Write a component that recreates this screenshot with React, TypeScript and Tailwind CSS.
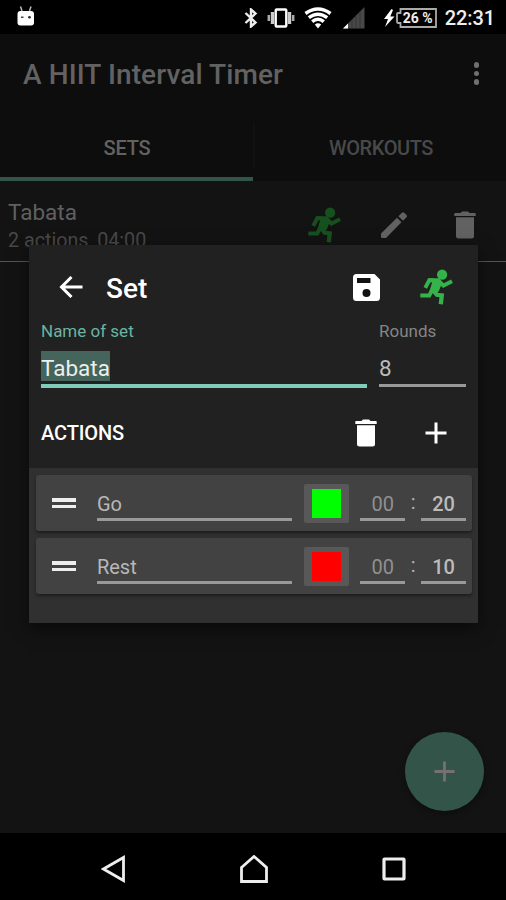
import { useState } from "react";
import type { ReactNode } from "react";

type IconProps = {
  className?: string;
};

type ActionType = {
  id: number;
  name: string;
  color: string;
  minutes: string;
  seconds: string;
};

const actions: ActionType[] = [
  { id: 1, name: "Go", color: "#00ff00", minutes: "00", seconds: "20" },
  { id: 2, name: "Rest", color: "#ff0000", minutes: "00", seconds: "10" },
];

function RunIcon({ className }: IconProps) {
  return (
    <svg viewBox="0 0 100 107" className={className} fill="none" stroke="currentColor">
      <circle cx="67" cy="16" r="15.5" fill="currentColor" stroke="none" />
      <path d="M26 27 L58 27 L68 38 L58 64 L50 76 L28 68 L37 39 L26 39 Z" fill="currentColor" stroke="none" />
      <path d="M40 33 H28 L16 56" strokeWidth="12" />
      <path d="M56 35 L71 49 L97 36" strokeWidth="12" />
      <path d="M37 62 L28 79.5 H1" strokeWidth="12" />
      <path d="M42 66 L51 77 L66 79 L63 106" strokeWidth="13" />
    </svg>
  );
}

function TrashIcon({ className }: IconProps) {
  return (
    <svg viewBox="0 0 22 28" className={className} fill="currentColor">
      <path d="M1 2h5.500L8 0.500h6L15.500 2H21a.7.7 0 0 1 .7.7V5H.3V2.700A.7.7 0 0 1 1 2z" />
      <path d="M2 6.300h18V25a2.500 2.500 0 0 1-2.500 2.500h-13A2.500 2.500 0 0 1 2 25z" />
    </svg>
  );
}

function PencilIcon({ className }: IconProps) {
  return (
    <svg viewBox="0 0 26 26" className={className} fill="currentColor">
      <path d="M0 21.500 16 5.700l4.500 4.500L5 26H1.200A1.200 1.200 0 0 1 0 24.800z" />
      <path d="m17.400 4.300 3.300-3.400a1.900 1.900 0 0 1 2.700 0l1.900 1.900a1.900 1.900 0 0 1 0 2.700L22 8.800z" />
    </svg>
  );
}

function SaveIcon({ className }: IconProps) {
  return (
    <svg viewBox="0 0 27 27" className={className}>
      <path
        d="M3.500 0H21.500L27 5.500v18a3.500 3.500 0 0 1-3.500 3.500h-20A3.500 3.500 0 0 1 0 23.500v-20A3.500 3.500 0 0 1 3.500 0z"
        fill="#fff"
      />
      <path d="M4 4h13.500v5H4z" fill="#111" />
      <circle cx="13.500" cy="19" r="4" fill="#111" />
    </svg>
  );
}

function PlusIcon({ className }: IconProps) {
  return (
    <svg viewBox="0 0 22 22" className={className} stroke="currentColor" strokeWidth="3">
      <path d="M11 .5v21M.5 11h21" />
    </svg>
  );
}

function StatusBar() {
  return (
    <div className="flex h-[34px] shrink-0 items-center justify-between bg-black pr-[11px] pl-[17px] text-[#eee]">
      <svg viewBox="0 0 18 20" className="h-5 w-[18px] -translate-y-px">
        <path d="M3.500 0.500 5 5M14 0.500 12.500 5" stroke="#bbb" strokeWidth="1.500" />
        <rect x=".5" y="5" width="16.500" height="14.500" rx="3" fill="#fff" />
        <rect x="4" y="10.500" width="2.500" height="1.500" fill="#444" />
        <circle cx="12.500" cy="11.300" r="1.300" fill="#222" />
      </svg>
      <div className="flex items-center pt-px">
        <svg viewBox="0 0 14 20" className="h-5 w-3.5" fill="none" stroke="#eee" strokeWidth="2.4">
          <path d="m1.500 5 10 9.500L7 18.500v-17L11.500 5.500 1.500 15" />
        </svg>
        <svg viewBox="0 0 28 20" className="ml-[9px] h-5 w-7">
          <rect x="8.700" y="1.500" width="10.600" height="17" rx="1" fill="none" stroke="#fff" strokeWidth="2.4" />
          <path d="M5.500 4v12M22.500 4v12" stroke="#ccc" strokeWidth="3.4" />
          <path d="M1.800 7v6M26.200 7v6" stroke="#aaa" strokeWidth="2.500" />
        </svg>
        <svg viewBox="0 0 28 22" className="ml-[9px] h-[22px] w-7" fill="none" stroke="#fff" strokeWidth="3.500">
          <path d="M1.500 6.500q12.500-9 25 0" />
          <path d="M4.800 10.700q9.200-7 18.400 0" />
          <path d="M8.200 14.600q5.800-4.800 11.600 0" />
          <path d="m10.800 17.500 3.200 4 3.200-4q-3.200-2.400-6.400 0z" fill="#fff" stroke="none" />
        </svg>
        <svg viewBox="0 0 22 22" className="ml-[11px] h-[22px] w-[22px]">
          <path d="M0 21.500 21.500 0v21.500z" fill="#484848" />
          <path d="M9 12.500v9M13 8.500v13M17 4.500v17" stroke="#333" />
          <path d="m0 21.500 5-5v5z" fill="#fff" />
        </svg>
        <svg viewBox="0 0 12 18" className="ml-[18px] h-[18px] w-3" fill="#fff">
          <path d="M8.500 0 1 10h4L2 18l9.500-10.500H7.300L10 1z" />
        </svg>
        <div className="relative ml-px flex h-5 w-[41px] items-center justify-center">
          <svg viewBox="0 0 41 20" className="absolute inset-0" fill="none" stroke="#aaa" strokeWidth="1.800">
            <path d="M4.500 1H40v18H4.500v-4H2Q1 15 1 13V7q0-2 1-2h2.500z" />
          </svg>
          <span className="relative ml-[3px] text-[14px] leading-none font-bold whitespace-nowrap">26 %</span>
        </div>
        <span className="ml-[8px] text-[20px] leading-none font-medium tracking-[-0.1px]">22:31</span>
      </div>
    </div>
  );
}

function Underlined({ className, children }: { className: string; children: ReactNode }) {
  return (
    <div className={`h-[37px] border-b-[3px] border-[#999] text-[20px] leading-[29px] ${className}`}>
      {children}
    </div>
  );
}

function ActionRow({ action }: { action: ActionType }) {
  return (
    <li className="flex h-14 rounded-[3px] bg-[#424242] pr-[6px] pl-4 shadow-[0_2px_3px_rgba(0,0,0,0.4)]">
      <div className="mt-[23px] flex w-6 flex-col gap-[3px]">
        <span className="h-[3.500px] bg-[#eee]" />
        <span className="h-[3.500px] bg-[#eee]" />
      </div>
      <Underlined className="mt-[9px] ml-[21px] w-[196px] pt-[6px] text-[#b8b8b8]">{action.name}</Underlined>
      <button className="mt-[9px] ml-[11.500px] flex h-[39px] w-[45px] justify-center rounded-[2px] bg-[#585858] pt-[5px]">
        <span className="h-[29px] w-[29px]" style={{ backgroundColor: action.color }} />
      </button>
      <Underlined className="mt-[9px] ml-[11.500px] w-[45px] pt-[6px] text-center text-[#909090]">
        {action.minutes}
      </Underlined>
      <span className="mt-[14px] w-4 text-center text-[20px] leading-[26px] text-[#b0b0b0]">:</span>
      <Underlined className="mt-[9px] w-[45px] pt-[6px] text-center font-medium text-[#bbb]">
        {action.seconds}
      </Underlined>
    </li>
  );
}

function SetDialog() {
  return (
    <section className="absolute top-[245px] left-[29px] h-[378px] w-[449px] bg-[#303030] shadow-[0_6px_16px_rgba(0,0,0,0.5)]">
      <div className="h-[223px] bg-[#212121] px-3">
        {/* Title */}
        <div className="flex h-[84px] items-center pr-[13px] pl-[18px] text-white">
          <svg viewBox="0 0 24 22" className="h-[22px] w-6" fill="none" stroke="currentColor" strokeWidth="3">
            <path d="M23.500 11H2.500M12.500 1l-10 10 10 10" />
          </svg>
          <h2 className="mt-[3px] ml-[23px] text-[28px] leading-none font-medium">Set</h2>
          <SaveIcon className="ml-auto h-[27px] w-[27px]" />
          <RunIcon className="ml-[40px] h-[36px] w-[33px] text-[#35b34a]" />
        </div>

        {/* Fields */}
        <div className="-mt-[9px] flex gap-[11px]">
          <label className="w-[327px] text-[17px] leading-[22px] text-[#69b5a1]">
            Name of set
            <div className="mt-[9px] h-[37px] border-b-4 border-[#80cbba]">
              <span className="inline-block h-[30px] bg-[#44645c] text-[22.500px] leading-[34px] text-[#eee]">
                Tabata
              </span>
            </div>
          </label>
          <label className="w-[88px] shrink-0 pl-px text-[17px] leading-[22px] text-[#858585]">
            Rounds
            <div className="mt-[9px] h-[36px] border-b-[3px] border-[#999] text-[22.500px] leading-[34px] text-[#bbb]">
              8
            </div>
          </label>
        </div>

        {/* Actions toolbar */}
        <div className="mt-[10px] flex h-[70px] items-center pr-[19px] text-white">
          <h3 className="text-[20px] font-medium tracking-[-0.1px]">ACTIONS</h3>
          <TrashIcon className="ml-auto h-7 w-[22px]" />
          <PlusIcon className="ml-[48px] h-[22px] w-[22px]" />
        </div>
      </div>
      <ul className="flex flex-col gap-[7px] pt-[7px] pr-[6px] pl-[7px]">
        {actions.map((action) => (
          <ActionRow key={action.id} action={action} />
        ))}
      </ul>
    </section>
  );
}

export default function App() {
  const [tab, setTab] = useState("SETS");

  return (
    <main className="relative flex h-[900px] w-[506px] flex-col overflow-hidden bg-[#131313] font-[Roboto,sans-serif]">
      <StatusBar />
      <header className="h-[147px] shrink-0 bg-[#0d0d0d]">
        <div className="flex h-[81px] items-center justify-between pr-[27px] pl-[23px]">
          <h1 className="text-[28px] font-medium tracking-[0.1px] text-[#626262]">A HIIT Interval Timer</h1>
          <div className="-mt-0.5 flex flex-col gap-[3px]">
            <span className="h-[5.500px] w-[5.500px] rounded-full bg-[#707070]" />
            <span className="h-[5.500px] w-[5.500px] rounded-full bg-[#707070]" />
            <span className="h-[5.500px] w-[5.500px] rounded-full bg-[#707070]" />
          </div>
        </div>
        <nav className="flex h-[66px]">
          {["SETS", "WORKOUTS"].map((name) => (
            <button
              key={name}
              onClick={() => setTab(name)}
              className={
                tab === name
                  ? "w-[253px] border-b-4 border-[#335549] pt-[3px] pl-px text-[20px] font-medium tracking-[-0.2px] text-[#626262]"
                  : "w-[253px] border-b-4 border-transparent pt-[3px] pl-[3px] text-[20px] font-medium tracking-[-0.4px] text-[#494949]"
              }
            >
              {name}
            </button>
          )).flatMap((button, i) =>
            i === 0 ? [button] : [<span key="divider" className="mt-2 -mr-0.5 h-11 w-0.5 bg-[#111]" />, button]
          )}
        </nav>
      </header>

      <div className="flex h-[81px] shrink-0 border-b border-[#555] pt-[17px] pl-2">
        <div className="w-[300px]">
          <p className="text-[22.500px] leading-[28px] text-[#606060]">Tabata</p>
          <p className="text-[19.700px] leading-[29px] text-[#484848]">2 actions, 04:00</p>
        </div>
        <RunIcon className="mt-[9px] h-[36px] w-[33px] text-[#17501f]" />
        <PencilIcon className="mt-[14px] ml-[40px] h-[26px] w-[26px] text-[#626262]" />
        <TrashIcon className="mt-[13px] ml-[47px] h-7 w-[22px] text-[#626262]" />
      </div>

      <button className="mt-auto mr-[22px] mb-[22px] flex h-[79px] w-[79px] items-center justify-center self-end rounded-full bg-[#335549] text-[#776f74] shadow-[0_3px_6px_rgba(0,0,0,0.3)]">
        <PlusIcon className="h-[21px] w-[21px]" />
      </button>

      <footer className="flex h-[67px] shrink-0 items-center bg-black pt-1 pl-[101px]">
        <svg viewBox="0 0 24 28" className="h-7 w-6" fill="none" stroke="#eee" strokeWidth="2.800">
          <path d="M22.500 2.500v23L2.500 14z" />
        </svg>
        <svg viewBox="0 0 28 28" className="ml-[115px] h-7 w-7" fill="none" stroke="#eee" strokeWidth="2.800">
          <path d="M1.500 12.500 14 1.500l12.500 11v14h-25z" />
        </svg>
        <svg viewBox="0 0 24 24" className="ml-[114px] h-6 w-6" fill="none" stroke="#eee" strokeWidth="3.200">
          <rect x="2" y="2" width="20" height="20" rx=".5" />
        </svg>
      </footer>

      <SetDialog />
    </main>
  );
}
